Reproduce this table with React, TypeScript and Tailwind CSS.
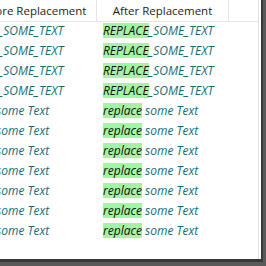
import React from "react";

const upperRows = 4;
const lowerRows = 7;

const font = { fontFamily: '"Open Sans", "Noto Sans", sans-serif' };

function Row({ upper }: { upper: boolean }) {
  return (
    <div className="flex h-[20px] items-start pt-[1px] text-[12px] italic leading-[15px] text-[#136b76] whitespace-nowrap">
      <div className="w-[97px] shrink-0 overflow-hidden">
        {upper ? (
          <span className="block ml-[-47px]">REPLACE_SOME_TEXT</span>
        ) : (
          <span className="block ml-[-46px]">replace some Text</span>
        )}
      </div>
      <div className="w-[132px] shrink-0 pl-[6px] overflow-hidden">
        {upper ? (
          <span>
            <span className="bg-[#a2f5a2] text-[#111]">REPLACE</span>_SOME_TEXT
          </span>
        ) : (
          <span>
            <span className="bg-[#a2f5a2] text-[#111]">replace</span> some Text
          </span>
        )}
      </div>
    </div>
  );
}

export default function App() {
  return (
    <div className="w-[266px] h-[266px] bg-[#5a5a5a] overflow-hidden" style={font}>
      <div className="w-[263px] h-[262px] bg-white border-r-2 border-b-[3px] border-[#383838] overflow-hidden">
        <div className="w-[259px] h-full border-r border-[#e2e2e2] overflow-hidden">
          <div className="flex h-[22px] border-b border-[#e5e5e5] text-[11.5px] leading-[21px] text-[#1e1e1e] whitespace-nowrap">
            <div className="w-[97px] shrink-0 overflow-hidden border-r border-[#e5e5e5]">
              <div className="ml-[-33px] w-[130px] text-center">Before Replacement</div>
            </div>
            <div className="w-[132px] shrink-0 border-r border-[#e5e5e5] text-center">After Replacement</div>
            <div className="flex-1" />
          </div>
          {Array.from({ length: upperRows }).map((_, i) => (
            <Row key={"u" + i} upper />
          ))}
          {Array.from({ length: lowerRows }).map((_, i) => (
            <Row key={"l" + i} upper={false} />
          ))}
        </div>
      </div>
    </div>
  );
}
